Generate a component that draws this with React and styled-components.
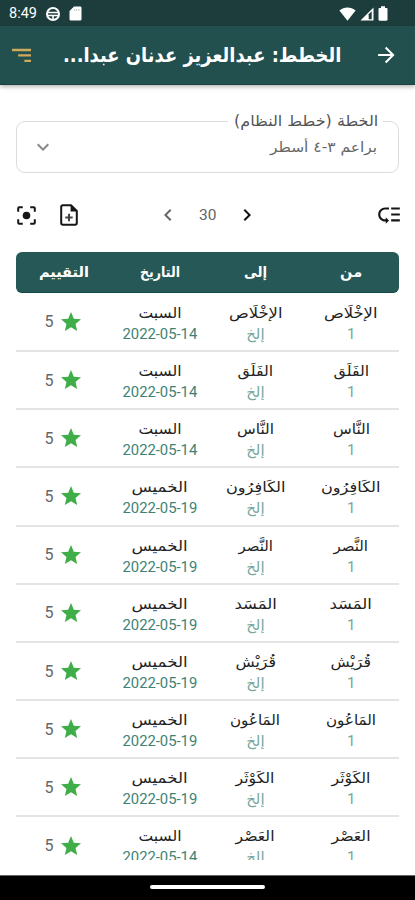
import React, { useLayoutEffect, useRef, useState } from 'react';
import styled, { createGlobalStyle, css } from 'styled-components';
import {
    MdArrowForward,
    MdChevronLeft,
    MdChevronRight,
    MdKeyboardArrowDown,
    MdLowPriority,
    MdStar
} from 'react-icons/md';

const GlobalStyle = createGlobalStyle`
  * {
    box-sizing: border-box;
  }

  body {
    margin: 0;
    background: #fff;
    font-family: Roboto, "DejaVu Sans", sans-serif;
  }
`;

const SATURDAY = { name: 'السبت', width: 43, date: '2022-05-14' };
const THURSDAY = { name: 'الخميس', width: 56, date: '2022-05-19' };

const HEADINGS = [
    { label: 'من', width: 22 },
    { label: 'إلى', width: 23 },
    { label: 'التاريخ', width: 40 },
    { label: 'التقييم', width: 50 }
];

const PLANS = [
    { surah: 'الإخْلَاص', width: 53, day: SATURDAY },
    { surah: 'الفَلَق', width: 36, day: SATURDAY },
    { surah: 'النَّاس', width: 37, day: SATURDAY },
    { surah: 'الكَافِرُون', width: 59, day: THURSDAY },
    { surah: 'النَّصر', width: 34, day: THURSDAY },
    { surah: 'المَسَد', width: 42, day: THURSDAY },
    { surah: 'قُرَيْش', width: 40, day: THURSDAY },
    { surah: 'المَاعُون', width: 50, day: THURSDAY },
    { surah: 'الكَوْثَر', width: 39, day: THURSDAY },
    { surah: 'العَصْر', width: 39, day: SATURDAY }
];

const Screen = styled.div`
  display: flex;
  flex-direction: column;
  width: 415px;
  height: 900px;
  overflow: hidden;
  background: #fff;
`;

const StatusBar = styled.div`
  display: flex;
  align-items: center;
  flex: none;
  height: 26px;
  padding: 1px 27px 0 9px;
  color: #fff;
  background: #1c3d3c;
`;

const Clock = styled.span`
  width: 36px;
  font-size: 14.5px;
  line-height: 16px;
`;

const StatusIcons = styled.div`
  display: flex;
  align-items: center;
  gap: ${props => props.gap}px;
  margin-left: ${props => props.end ? 'auto' : 0};

  svg {
    display: block;
  }
`;

const AppBar = styled.header`
  display: flex;
  align-items: center;
  justify-content: space-between;
  flex: none;
  height: 59px;
  padding: 0 16px 0 12px;
  color: #fff;
  background: #22504f;
  border-bottom: 1px solid #174442;
  box-shadow: 0 2px 4px rgba(0, 0, 0, .28);
`;

const Title = styled.h1`
  display: flex;
  flex: 1;
  margin: 0 33px 0 0;
  direction: rtl;
  font: bold 20px/28px "DejaVu Sans", sans-serif;
`;

const Content = styled.main`
  display: flex;
  flex-direction: column;
  flex: none;
  height: 790px;
  padding: 26px 16px 0;
`;

const Select = styled.fieldset`
  display: flex;
  align-items: center;
  justify-content: space-between;
  flex: none;
  height: 62px;
  margin: 0;
  padding: 0 21px 0 14px;
  direction: rtl;
  color: #666;
  border: 1px solid #dcdcdc;
  border-radius: 9px;
`;

const SelectLabel = styled.legend`
  width: 155px;
  height: 20px;
  margin-right: -6px;
  padding: 0 5px;
  font: 15px/20px "DejaVu Sans", sans-serif;
  color: #555;
`;

const SelectValue = styled.div`
  display: flex;
  justify-content: space-between;
  align-items: center;
  width: 100%;
  height: 32px;
  font: 14px/20px "DejaVu Sans", sans-serif;

  svg {
    color: #888;
  }
`;

const Toolbar = styled.div`
  display: grid;
  grid-template-columns: 140px auto 1fr;
  align-items: center;
  flex: none;
  height: 30px;
  margin: 27px -3px 22px 0;
  color: #161616;

  > svg {
    justify-self: end;
  }
`;

const ToolGroup = styled.div`
  display: flex;
  align-items: center;
  gap: ${props => props.gap}px;

  svg {
    display: block;
  }
`;

const Pager = styled(ToolGroup)`
  font-size: 15.5px;
  color: #666;

  svg:last-child {
    color: #111;
  }
`;

const columns = css`
  display: grid;
  grid-template-columns: repeat(4, 1fr);
  direction: rtl;
`;

const TableHead = styled.div`
  ${columns};
  flex: none;
  align-items: center;
  height: 41px;
  color: #fff;
  background: #265857;
  border-bottom: 1px solid #124846;
  border-radius: 6px;
  font: bold 14.5px/20px "DejaVu Sans", sans-serif;
`;

const HeadCell = styled.div`
  display: flex;
  justify-content: center;
`;

const TableBody = styled.div`
  height: 567px;
  padding-top: .8px;
  overflow: hidden;
`;

const Row = styled.div`
  ${columns};
  height: 58.2px;
  border-bottom: 2px solid #e4e4e4;
`;

const Cell = styled.div`
  display: flex;
  flex-direction: column;
  align-items: center;
  padding-top: 8px;
`;

const Primary = styled.div`
  display: flex;
  justify-content: center;
  height: 22px;
  font: 14.5px/22px "DejaVu Sans", sans-serif;
  color: #222;
`;

const Secondary = styled.div`
  display: flex;
  justify-content: center;
  height: 20px;
  font-size: 15px;
  line-height: 20px;
  color: ${props => props.soft ? '#75a79d' : '#3e8275'};
`;

const Rating = styled.div`
  display: flex;
  align-items: center;
  justify-content: center;
  gap: 6px;
  font-size: 16px;
  color: #666;

  svg {
    color: #3fae49;
  }
`;

const NavigationBar = styled.div`
  display: flex;
  justify-content: center;
  flex: none;
  height: 25px;
  padding-top: 9px;
  background: #000;
  border-top: 1px solid #666;
`;

const HomeHandle = styled.div`
  width: 115px;
  height: 4px;
  border-radius: 2px;
  background: #fff;
`;

const FitLine = styled.span`
  flex: none;
  display: inline-block;
  white-space: nowrap;
  transform-origin: ${props => props.origin};
`;

// squeezes a line of text to a fixed width, keeping its height
const Fit = ({ width, origin='center', children }) => {
    let line = useRef(null);
    let [ scale, setScale ] = useState(1);

    useLayoutEffect(() => {
        setScale(width / line.current.offsetWidth);
    }, [ width, children ]);

    return (
        <FitLine ref={line} origin={origin} style={{ transform: `scaleX(${scale})` }}>
            {children}
        </FitLine>
    );
};

const WheelIcon = () => (
    <svg width="16" height="16" viewBox="0 0 16 16" fill="none" stroke="#fff">
        <circle cx="8" cy="8" r="6" strokeWidth="2" />
        <path d="M2 6.5h12M2.5 9.5h11M8 9.5V14" strokeWidth="1.6" />
    </svg>
);

const CardIcon = () => (
    <svg width="13" height="15" viewBox="0 0 13 15">
        <path d="M5 .5h6.2a1.3 1.3 0 0 1 1.3 1.3v11.4a1.3 1.3 0 0 1-1.3 1.3H1.8a1.3 1.3 0 0 1-1.3-1.3V5z" fill="#fff" />
        <path d="M5.3 3v1.7M7.6 3v1.7M9.9 3v1.7" stroke="#9aabab" strokeWidth=".8" />
    </svg>
);

const WifiIcon = () => (
    <svg width="17" height="14" viewBox="0 0 17 14">
        <path d="M.4 3.6C5-.6 12-.6 16.6 3.6L8.5 13.7z" fill="#fff" />
    </svg>
);

const SignalIcon = () => (
    <svg width="14" height="14" viewBox="0 0 14 14">
        <path d="M.5 13.5l13-13v13z" fill="#fff" />
        <path d="M8.7 7.2l3-3v8H8.7z" fill="#1c3d3c" />
    </svg>
);

const BatteryIcon = () => (
    <svg width="10" height="15" viewBox="0 0 10 15">
        <path d="M3 .3h4v1.6h1.4c.7 0 1.1.4 1.1 1.1v10.6c0 .7-.4 1.1-1.1 1.1H1.6c-.7 0-1.1-.4-1.1-1.1V3c0-.7.4-1.1 1.1-1.1H3z" fill="#fff" />
    </svg>
);

const SortIcon = () => (
    <svg width="20" height="15" viewBox="0 0 20 15" fill="#d0a95b">
        <path d="M0 .5h20v2.4H0zM6.5 6.2H20v2.4H6.5zM13 11.9h7v2.4h-7z" />
    </svg>
);

const FocusIcon = () => (
    <svg width="21" height="21" viewBox="0 0 21 21" fill="none" stroke="currentColor" strokeWidth="2">
        <path d="M2.2 6.8V3.3q0-1 1-1h3.6M14.2 2.3h3.6q1 0 1 1v3.5M18.8 14.2v3.6q0 1-1 1h-3.6M6.8 18.8H3.2q-1 0-1-1v-3.6" />
        <circle cx="10.5" cy="10.5" r="3.8" fill="currentColor" stroke="none" />
    </svg>
);

const NoteAddIcon = () => (
    <svg width="18" height="22" viewBox="0 0 18 22" fill="none" stroke="currentColor">
        <path d="M11 1.2H3Q1.2 1.2 1.2 3v16q0 1.8 1.8 1.8h12q1.8 0 1.8-1.8V7z" strokeWidth="2" strokeLinejoin="round" />
        <path d="M10.6 1.2V7.4h6.2z" fill="currentColor" stroke="none" />
        <path d="M9 9.8v7.4M5.3 13.5h7.4" stroke="#444" strokeWidth="2" />
    </svg>
);

const PlanRow = ({ surah, width, day }) => (
    <Row>
        <Cell>
            <Primary><Fit width={width}>{surah}</Fit></Primary>
            <Secondary soft>1</Secondary>
        </Cell>
        <Cell>
            <Primary><Fit width={width}>{surah}</Fit></Primary>
            <Secondary soft><Fit width={18}>إلخ</Fit></Secondary>
        </Cell>
        <Cell>
            <Primary><Fit width={day.width}>{day.name}</Fit></Primary>
            <Secondary><Fit width={75}>{day.date}</Fit></Secondary>
        </Cell>
        <Rating>
            <MdStar size={24} />
            <span>5</span>
        </Rating>
    </Row>
);

const App = () => {
    return (
        <Screen>
            <GlobalStyle />
            <StatusBar>
                <Clock>8:49</Clock>
                <StatusIcons gap={8}>
                    <WheelIcon />
                    <CardIcon />
                </StatusIcons>
                <StatusIcons gap={4} end>
                    <WifiIcon />
                    <SignalIcon />
                    <BatteryIcon />
                </StatusIcons>
            </StatusBar>
            <AppBar>
                <SortIcon />
                <Title>
                    <Fit width={278} origin="right">الخطط: عبدالعزيز عدنان عبدا...</Fit>
                </Title>
                <MdArrowForward size={26} />
            </AppBar>
            <Content>
                <Select>
                    <SelectLabel>
                        <Fit width={144} origin="right">الخطة (خطط النظام)</Fit>
                    </SelectLabel>
                    <SelectValue>
                        <Fit width={107} origin="right">براعم ٣-٤ أسطر</Fit>
                        <MdKeyboardArrowDown size={24} />
                    </SelectValue>
                </Select>
                <Toolbar>
                    <ToolGroup gap={23}>
                        <FocusIcon />
                        <NoteAddIcon />
                    </ToolGroup>
                    <Pager gap={19}>
                        <MdChevronLeft size={24} />
                        <span>30</span>
                        <MdChevronRight size={24} />
                    </Pager>
                    <MdLowPriority size={26} />
                </Toolbar>
                <TableHead>
                    {HEADINGS.map(({ label, width }) =>
                        <HeadCell key={label}><Fit width={width}>{label}</Fit></HeadCell>
                    )}
                </TableHead>
                <TableBody>
                    {PLANS.map(plan => <PlanRow key={plan.surah} {...plan} />)}
                </TableBody>
            </Content>
            <NavigationBar>
                <HomeHandle />
            </NavigationBar>
        </Screen>
    );
};

export default App;
